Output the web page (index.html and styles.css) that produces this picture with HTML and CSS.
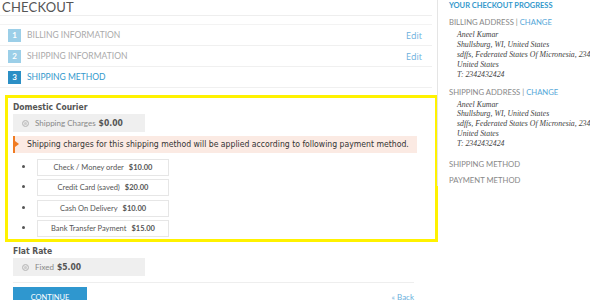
FILE: index.html
```html
<!DOCTYPE html>
<html>
<head>
<meta charset="utf-8">
<link rel="stylesheet" href="styles.css">
</head>
<body>
<div class="page">
  <main class="main">
    <h1 class="title">CHECKOUT</h1>
    <ol class="steps">
      <li class="step">
        <span class="num">1</span><span class="step-name">BILLING INFORMATION</span>
        <a class="edit">Edit</a>
      </li>
      <li class="step">
        <span class="num">2</span><span class="step-name">SHIPPING INFORMATION</span>
        <a class="edit">Edit</a>
      </li>
      <li class="step active">
        <span class="num">3</span><span class="step-name">SHIPPING METHOD</span>
      </li>
    </ol>

    <section class="highlight">
      <div class="carrier">Domestic Courier</div>
      <label class="rate"><span class="radio"></span><span class="rate-name">Shipping Charges</span> <b class="price">$0.00</b></label>
      <div class="notice">Shipping charges for this shipping method will be applied according to following payment method.</div>
      <ul class="payments">
        <li><span class="pay-box">Check / Money order <b>$10.00</b></span></li>
        <li><span class="pay-box">Credit Card (saved) <b>$20.00</b></span></li>
        <li><span class="pay-box">Cash On Delivery <b>$10.00</b></span></li>
        <li><span class="pay-box">Bank Transfer Payment <b>$15.00</b></span></li>
      </ul>
    </section>

    <div class="flat">
      <div class="carrier">Flat Rate</div>
      <label class="rate"><span class="radio"></span><span class="rate-name">Fixed</span> <b class="price">$5.00</b></label>
    </div>

    <div class="actions">
      <button class="continue">CONTINUE</button>
      <a class="back">« Back</a>
    </div>
  </main>

  <aside class="side">
    <h2 class="side-title">YOUR CHECKOUT PROGRESS</h2>
    <div class="side-head">BILLING ADDRESS | <a class="change">CHANGE</a></div>
    <address class="addr">Aneel Kumar<br>Shullsburg, WI, United States<br>sdffs, Federated States Of Micronesia, 2342424<br>United States<br>T: 2342432424</address>
    <div class="side-head">SHIPPING ADDRESS | <a class="change">CHANGE</a></div>
    <address class="addr">Aneel Kumar<br>Shullsburg, WI, United States<br>sdffs, Federated States Of Micronesia, 2342424<br>United States<br>T: 2342432424</address>
    <div class="side-head plain first">SHIPPING METHOD</div>
    <div class="side-head plain">PAYMENT METHOD</div>
  </aside>
</div>
</body>
</html>
```

FILE: styles.css
```css
html, body {
  margin: 0;
  padding: 0;
  overflow: hidden;
  background: #fff;
}
body {
  font-family: Lato, "Open Sans", sans-serif;
  color: #555;
  width: 590px;
  height: 300px;
}
.page {
  display: flex;
  align-items: flex-start;
}
.main {
  width: 432px;
  flex: none;
}
.title {
  margin: 0;
  font-size: 13px;
  font-weight: 400;
  line-height: 13px;
  padding: 1px 0 0 2px;
  color: #555;
  border-bottom: 1px solid #eee;
  height: 14px;
  box-sizing: content-box;
  letter-spacing: 0.2px;
}
.steps {
  list-style: none;
  margin: 8px 0 0;
  padding: 0;
  border-top: 1px solid #f3f3f3;
}
.step {
  display: flex;
  align-items: center;
  height: 20px;
  padding-left: 8px;
  padding-right: 10px;
  border-bottom: 1px solid #f0f0f0;
}
.num {
  width: 13px;
  height: 13px;
  background: #9ccfe8;
  color: #fff;
  font-size: 8px;
  line-height: 13px;
  text-align: center;
  font-weight: 700;
  flex: none;
}
.step-name {
  margin-left: 6px;
  font-size: 8.5px;
  color: #aaa;
  flex: 1;
}
.step.active .num { background: #2b8fc5; }
.step.active .step-name { color: #3399cc; }
.edit {
  font-family: "Open Sans", sans-serif;
  font-size: 9px;
  color: #6aafdc;
}
.highlight {
  margin: 7px 0 0 5px;
  width: 417px;
  border: 3px solid #fff200;
  padding: 3px 5px 0 5px;
}
.carrier {
  font-family: "DejaVu Sans", sans-serif;
  font-stretch: condensed;
  font-weight: 700;
  font-size: 8.5px;
  color: #555;
  line-height: 12px;
}
.rate {
  display: flex;
  align-items: center;
  width: 132px;
  height: 18px;
  background: #efefef;
  margin-top: 1px;
  box-sizing: border-box;
  padding-left: 9px;
}
.radio {
  width: 5px;
  height: 5px;
  border-radius: 50%;
  background: #ccc;
  border: 1px solid #bbb;
  margin-right: 6px;
  box-shadow: inset 0 0 0 1px #e8e8e8;
}
.rate-name {
  font-size: 8px;
  color: #888;
}
.price {
  font-family: "DejaVu Sans", sans-serif;
  font-stretch: condensed;
  font-size: 8.5px;
  font-weight: 700;
  color: #555;
  margin-left: 3px;
}
.notice {
  position: relative;
  margin-top: 4px;
  background: #fbeae3;
  border-left: 2px solid #f07b22;
  height: 17px;
  line-height: 17px;
  padding-left: 12px;
  font-family: "DejaVu Sans", sans-serif;
  font-stretch: condensed;
  font-size: 8.6px;
  color: #333;
  width: 390px;
}
.notice::before {
  content: "";
  position: absolute;
  left: 0;
  top: 5px;
  border-left: 4px solid #f07b22;
  border-top: 3.5px solid transparent;
  border-bottom: 3.5px solid transparent;
}
.payments {
  margin: 5px 0 0;
  padding: 0 0 0 22px;
  list-style: disc;
  font-size: 8px;
  line-height: 17px;
  color: #555;
}
.payments li {
  margin-bottom: 3.3px;
  height: 17px;
}
.payments li::marker {
  font-size: 9px;
}
.pay-box {
  display: inline-flex;
  align-items: center;
  justify-content: center;
  width: 132px;
  height: 17px;
  box-sizing: border-box;
  border: 1px solid #e6e6e6;
  margin-left: 2px;
  vertical-align: top;
  font-size: 7.5px;
  color: #555;
}
.pay-box b {
  margin-left: 5px;
  font-weight: 700;
}
.flat {
  padding-left: 13px;
  margin-top: 3px;
}
.actions {
  display: flex;
  align-items: flex-start;
  justify-content: space-between;
  margin: 6px 18px 0 13px;
  border-top: 1px solid #eee;
  padding-top: 4px;
}
.continue {
  width: 74px;
  height: 20px;
  background: #2f97cf;
  border: none;
  color: #fff;
  font-family: Lato, sans-serif;
  font-size: 7.5px;
  padding: 0;
}
.back {
  font-size: 8px;
  color: #6aafdc;
  padding-top: 5px;
}
.side {
  margin-left: 5px;
  border-left: 1px solid #e5e5e5;
  padding-left: 11px;
  height: 186px;
  white-space: nowrap;
}
.side-title {
  margin: 2px 0 0;
  font-size: 7.5px;
  font-weight: 700;
  color: #3399cc;
  line-height: 8px;
}
.side-head {
  font-size: 7.7px;
  color: #888;
  margin-top: 7px;
  line-height: 10px;
}
.change { color: #55a7d8; }
.addr {
  font-family: "Liberation Serif", serif;
  font-style: italic;
  font-size: 7.8px;
  line-height: 9.9px;
  color: #444;
  padding-left: 8px;
  margin: 3px 0 6px;
}
.plain { margin-top: 6px; }
.plain.first { margin-top: 10px; }
```
